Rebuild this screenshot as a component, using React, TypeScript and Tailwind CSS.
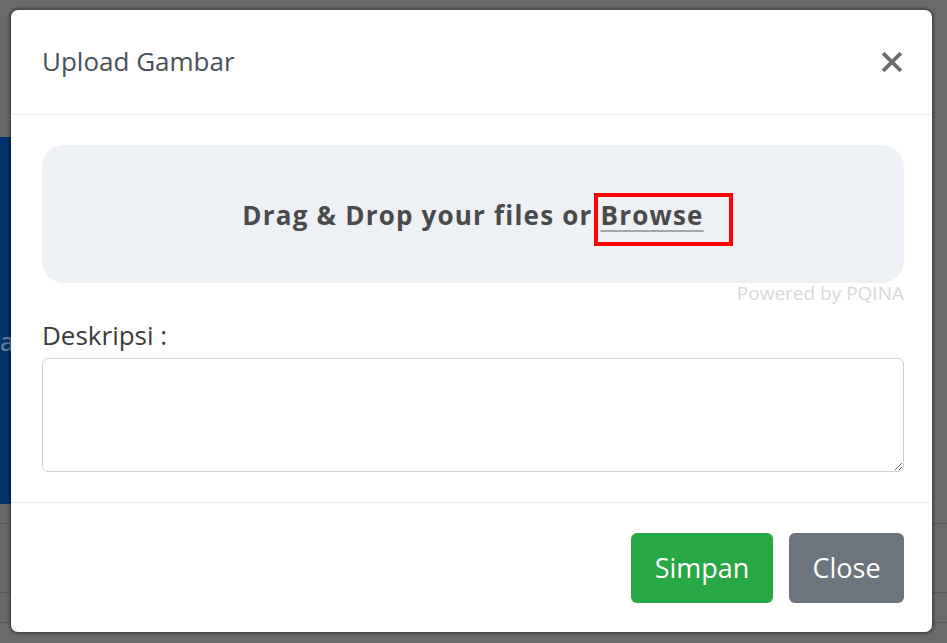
import React from "react";

const font = { fontFamily: '"Open Sans", "Noto Sans", sans-serif' };

const Backdrop = () => {
  return (
    <div className="flex flex-col h-full w-full bg-[#6a6a6a]">
      <div className="h-[137px]"></div>
      <div className="h-[367px] w-[220px] bg-[#01336f] pt-[192px]">
        <span className="text-[25px] leading-none text-[#6f7f99]">a</span>
      </div>
      <div className="h-[19px]"></div>
      <div className="border-t border-[#595959] h-[69px]"></div>
      <div className="border-t border-[#595959] h-[30px]"></div>
      <div className="border-t border-[#595959]"></div>
    </div>
  );
};

const CloseIcon = () => (
  <svg width="20" height="20" viewBox="0 0 20 20">
    <path d="M2.5 2.5 L17.5 17.5 M17.5 2.5 L2.5 17.5" stroke="#6b6b6b" strokeWidth="3.8" strokeLinecap="square" />
  </svg>
);

const UploadModal = () => {
  return (
    <div
      className="absolute left-[11px] top-[10px] w-[921px] h-[622px] bg-white rounded-[7px] shadow-[0_0_3px_2px_rgba(0,0,0,0.35)] flex flex-col overflow-hidden"
      style={font}
    >
      <div className="h-[105px] shrink-0 flex items-center justify-between pl-[31px] pr-[30px] border-b border-[#e9ecef]">
        <h5 className="text-[26px] text-[#495057] leading-none -mt-[2px]">Upload Gambar</h5>
        <CloseIcon />
      </div>

      <div className="flex-1 pl-[31px] pr-[28px] pt-[30px] border-b border-[#e9ecef] flex flex-col">
        <div className="relative h-[138px] bg-[#edf0f4] rounded-[22px] flex items-center justify-center">
          <span className="text-[26px] tracking-[1.2px] font-bold text-[#4a4a4a] pt-[2px]">
            Drag &amp; Drop your files or{" "}
            <span className="underline decoration-[#a7a7a7] decoration-2 underline-offset-[5px]">Browse</span>
          </span>
          <div className="absolute left-[552px] top-[48px] w-[139px] h-[53px] border-[4px] border-[#ff0000]"></div>
        </div>
        <div className="flex justify-end">
          <span className="text-[19px] leading-[18px] text-[#d9d9d9] pt-[1px]">Powered by PQINA</span>
        </div>
        <label className="mt-[17px] text-[26px] leading-[32px] text-[#3c3c3c]">Deskripsi :</label>
        <textarea
          className="mt-[7px] h-[114px] w-full border border-[#ced4da] rounded-[6px] outline-none resize-y"
          readOnly
        ></textarea>
      </div>

      <div className="h-[129px] shrink-0 flex items-start justify-end gap-[16px] pt-[30px] pr-[28px]">
        <button className="h-[70px] w-[142px] rounded-[6px] bg-[#28a745] text-white text-[27px]">Simpan</button>
        <button className="h-[70px] w-[115px] rounded-[6px] bg-[#6c757d] text-white text-[27px]">Close</button>
      </div>
    </div>
  );
};

const App = () => {
  return (
    <div className="relative w-[947px] h-[643px] overflow-hidden">
      <Backdrop />
      <UploadModal />
    </div>
  );
};

export default App;
